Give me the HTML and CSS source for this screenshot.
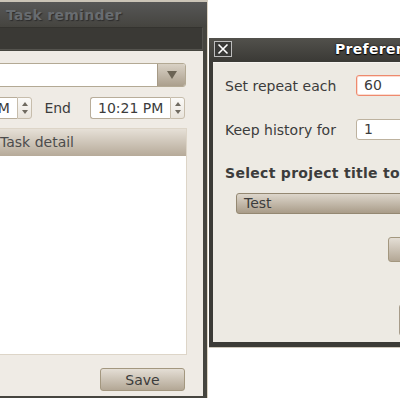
FILE: index.html
```html
<!DOCTYPE html>
<html lang="en">
<head>
  <meta charset="UTF-8">
  <title>Task reminder</title>
  <link rel="stylesheet" href="styles.css">
</head>
<body>
  <div class="desktop">
    <!-- main window, partly off screen on the left -->
    <div class="window task-win">
      <div class="titlebar"><span class="title title-inactive">Task reminder</span></div>
      <div class="menubar"></div>
      <div class="content">
        <div class="combo">
          <div class="combo-text"></div>
          <div class="combo-btn">
            <svg width="10" height="8" viewBox="0 0 10 8"><path d="M0 0h10L5 8z" fill="#6b6354"/></svg>
          </div>
        </div>
        <div class="time-row">
          <div class="spin spin-start">
            <span class="spin-text">10:21 PM</span>
            <div class="spin-btns">
              <svg width="6" height="4" viewBox="0 0 6 4"><path d="M0 4L3 0L6 4z" fill="#6f6a60"/></svg>
              <svg width="6" height="4" viewBox="0 0 6 4"><path d="M0 0h6L3 4z" fill="#6f6a60"/></svg>
            </div>
          </div>
          <span class="lbl-end">End</span>
          <div class="spin spin-end">
            <span class="spin-text">10:21 PM</span>
            <div class="spin-btns">
              <svg width="6" height="4" viewBox="0 0 6 4"><path d="M0 4L3 0L6 4z" fill="#6f6a60"/></svg>
              <svg width="6" height="4" viewBox="0 0 6 4"><path d="M0 0h6L3 4z" fill="#6f6a60"/></svg>
            </div>
          </div>
        </div>
        <div class="detail">
          <div class="detail-head">
            <div class="col col-first"></div>
            <div class="col">Task detail</div>
          </div>
          <div class="detail-body"></div>
        </div>
        <div class="actions"><button class="btn btn-save">Save</button></div>
      </div>
    </div>

    <!-- preferences dialog on top -->
    <div class="window pref-win">
      <div class="titlebar pref-titlebar">
        <span class="close-btn">
          <svg width="12" height="12" viewBox="0 0 12 12"><path d="M1.5 1.5L10.5 10.5M10.5 1.5L1.5 10.5" stroke="#fff" stroke-width="1.6"/></svg>
        </span>
        <span class="title title-active">Preferences</span>
      </div>
      <div class="pref-body">
        <div class="pref-row">
          <span class="pref-label">Set repeat each</span>
          <span class="entry entry-focus">60</span>
        </div>
        <div class="pref-row">
          <span class="pref-label">Keep history for</span>
          <span class="entry">1</span>
        </div>
        <div class="pref-heading">Select project title to</div>
        <div class="btn combo-test">Test</div>
        <div class="pref-actions"><span class="btn btn-part"></span></div>
        <div class="pref-bottom"><span class="btn-part2"></span></div>
      </div>
    </div>
  </div>
</body>
</html>
```

FILE: styles.css
```css
body {
  margin: 0;
  background: #fff;
  font-family: "DejaVu Sans", sans-serif;
  font-size: 14px;
  color: #3c3c3c;
}
.desktop {
  position: relative;
  width: 400px;
  height: 400px;
  overflow: hidden;
  background: #fff;
}
.window {
  position: absolute;
  display: flex;
  flex-direction: column;
  box-sizing: border-box;
  background: #46453f;
}
.titlebar {
  display: flex;
  align-items: center;
  flex-shrink: 0;
  white-space: nowrap;
}
.title {
  font-weight: bold;
  font-size: 14px;
  letter-spacing: 0.3px;
}
.title-inactive {
  color: #686c70;
  text-shadow: 1px 1px 1px #2d2d2d;
}
.title-active {
  color: #fff;
  text-shadow: 0 0 2px #000, 0 1px 1px #000;
}

/* task reminder window */
.task-win {
  left: -120px;
  top: 0;
  width: 328px;
  height: 398px;
  border-top: 2px solid #cbc4b7;
  border-right: 1px solid #dcd3c3;
}
.task-win .titlebar {
  height: 25px;
  padding-left: 126px;
  background: linear-gradient(#575757, #45443f);
}
.menubar {
  height: 23px;
  margin: 0 4px;
  box-sizing: border-box;
  background: #3a3935;
  border: 1px solid #54534e;
  border-top-color: #34332f;
}
.content {
  flex: 1;
  display: flex;
  flex-direction: column;
  margin: 1px 4px 2px;
  padding: 12px 17px 5px 12px;
  background: #efebe5;
}
.combo {
  display: flex;
  height: 24px;
  box-sizing: border-box;
  border: 1px solid #b3a994;
  border-radius: 3px;
  background: #fff;
}
.combo-text {
  flex: 1;
}
.combo-btn {
  width: 27px;
  display: flex;
  align-items: center;
  justify-content: center;
  border-left: 1px solid #a69a86;
  border-radius: 0 2px 2px 0;
  background: linear-gradient(#d9d1c5, #ab9f8d);
}
.time-row {
  display: flex;
  align-items: center;
  justify-content: flex-end;
  height: 22px;
  margin-top: 10px;
  padding-right: 1px;
}
.spin {
  display: flex;
  height: 22px;
  box-sizing: border-box;
}
.spin-start {
  width: 96px;
}
.spin-end {
  width: 95px;
}
.spin-text {
  flex: 1;
  padding-left: 7px;
  line-height: 20px;
  white-space: nowrap;
  background: #fff;
  border: 1px solid #b8ad9a;
  border-right: none;
  border-radius: 3px 0 0 3px;
}
.spin-btns {
  width: 15px;
  box-sizing: border-box;
  display: flex;
  flex-direction: column;
  align-items: center;
  justify-content: space-around;
  padding: 2px 0;
  border: 1px solid #c7bdac;
  border-radius: 0 3px 3px 0;
  background: linear-gradient(#fbfaf8, #e9e4dc);
}
.lbl-end {
  margin: 0 19px 0 12px;
}
.detail {
  flex: 1;
  display: flex;
  flex-direction: column;
  margin-top: 9px;
  border: 1px solid #ddd5c8;
  margin-right: -1px;
}
.detail-head {
  display: flex;
  height: 27px;
  background: linear-gradient(#e6e0d7, #b6aa99);
  color: #4c4c4c;
}
.col {
  line-height: 27px;
  padding-left: 6px;
  white-space: nowrap;
}
.col-first {
  width: 90px;
  border-right: 1px solid #a89c8a;
}
.detail-body {
  flex: 1;
  background: #fff;
}
.actions {
  display: flex;
  justify-content: flex-end;
  margin-top: 13px;
  padding-right: 1px;
}
.btn {
  box-sizing: border-box;
  border: 1px solid #a3977f;
  border-radius: 3px;
  background: linear-gradient(#e4ded5, #b3a795);
  color: #3c3c3c;
  font-family: inherit;
  font-size: 14px;
}
.btn-save {
  width: 85px;
  height: 23px;
  padding: 0;
}

/* preferences dialog */
.pref-win {
  left: 209px;
  top: 38px;
  width: 300px;
  height: 310px;
  border-bottom: 1px solid #cfc8bb;
  background: #3c3b37;
}
.pref-titlebar {
  height: 22px;
  background: linear-gradient(#52514c, #3c3b37);
}
.close-btn {
  display: flex;
  align-items: center;
  justify-content: center;
  width: 18px;
  height: 16px;
  box-sizing: border-box;
  margin-left: 5px;
  border: 1px solid #bdbdbd;
  background: #3a3a38;
}
.title-active {
  margin-left: 103px;
}
.pref-body {
  flex: 1;
  margin: 2px 0 5px 4px;
  padding: 12px 0 0 12px;
  background: #edeae3;
  border-top: 1px solid #f6f4f0;
  white-space: nowrap;
}
.pref-row {
  display: flex;
  align-items: center;
  height: 21px;
}
.pref-row + .pref-row {
  margin-top: 23px;
}
.pref-label {
  width: 131px;
}
.entry {
  width: 100px;
  height: 21px;
  box-sizing: border-box;
  padding-left: 7px;
  line-height: 19px;
  background: #fff;
  border: 1px solid #bdb29f;
  border-radius: 3px;
}
.entry-focus {
  border-color: #ee8a6e;
  box-shadow: inset 0 0 0 1px #fcdcd1;
}
.pref-heading {
  margin-top: 25px;
  font-weight: bold;
  letter-spacing: 0.3px;
}
.combo-test {
  width: 200px;
  height: 21px;
  margin: 12px 0 0 11px;
  padding-left: 7px;
  line-height: 19px;
  background: linear-gradient(#ddd6cb, #a99c89);
  border-color: #948872;
}
.pref-actions {
  margin-top: 23px;
  padding-left: 163px;
}
.btn-part {
  display: block;
  width: 80px;
  height: 25px;
}
.pref-bottom {
  margin-top: 42px;
  padding-left: 174px;
}
.btn-part2 {
  display: block;
  width: 80px;
  height: 32px;
  box-sizing: border-box;
  border: 1px solid #a79c8a;
  border-radius: 3px;
}
```
